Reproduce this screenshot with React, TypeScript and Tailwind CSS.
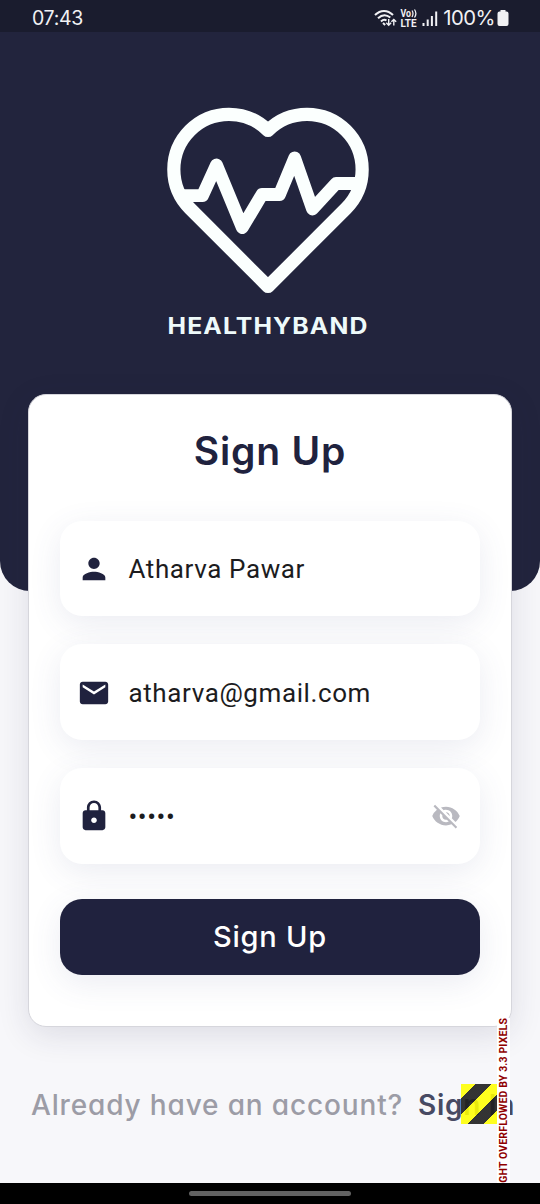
import type { ReactNode } from "react";
import { MdEmail, MdLock, MdPerson, MdVisibilityOff } from "react-icons/md";

function StatusBar() {
  return (
    <div className="flex h-8 items-center bg-[#1a1c2e] pl-8 pr-[31px] font-['Inter',sans-serif] text-[#f1f1f4]">
      <span className="mt-[5px] text-[19.500px] leading-none tracking-[-0.3px]">07:43</span>
      <div className="ml-auto flex items-center pt-[4px]">
        <svg width="24" height="20" viewBox="0 0 24 20" fill="none" stroke="currentColor" strokeWidth="2">
          <path d="M1 7C6.500 1.500 13.500 1.500 19 7" />
          <path d="M4 10.300C8 6.500 12.500 6.500 16.300 9.500" />
          <path d="M7 13.500C9 11.500 11 11.500 12.500 12.500" />
          <path d="M9 15l2.200 2" />
          <path d="M14.700 11v6M12.300 14.800l2.400 2.400 2.400-2.400M19.800 17.500v-6M17.400 13.800l2.400-2.400 2.400 2.400" strokeWidth="1.400" />
        </svg>
        <svg width="18" height="20" viewBox="0 0 18 20" className="ml-[2px]" fill="currentColor">
          <text x="0.500" y="9" textLength="10.500" lengthAdjust="spacingAndGlyphs" className="font-['Roboto',sans-serif] text-[10px] font-bold">Vo</text>
          <path d="M12 2.500q2 3 0 6.500M14.500 1.500q2.800 4 0 8" fill="none" stroke="currentColor" strokeWidth="1.300" />
          <text x="0.500" y="18.800" textLength="16" lengthAdjust="spacingAndGlyphs" className="font-['Roboto',sans-serif] text-[11px] font-bold">LTE</text>
        </svg>
        <svg width="16" height="20" viewBox="0 0 16 20" className="ml-1" stroke="currentColor" strokeWidth="2">
          <path d="M1.500 18v-3M5.700 18V11.500M9.900 18V8M14.200 18V3.500" />
        </svg>
        <span className="ml-[5px] text-[20.300px] leading-none tracking-[-0.5px]">100%</span>
        <svg width="12" height="18" viewBox="0 0 12 18" className="ml-[2px]" fill="currentColor">
          <path d="M3.500 1h5v1.500H9.500q2 0 2 2v10.500q0 2-2 2H2.500q-2 0-2-2V4.500q0-2 2-2h1z" />
        </svg>
      </div>
    </div>
  );
}

function Logo() {
  return (
    <svg width="240" height="250" viewBox="148 90 240 250" className="mx-auto mt-[58px] -translate-x-[2px]" fill="none" stroke="#fbfffe" strokeLinejoin="round" strokeLinecap="round">
      <path strokeWidth="13.200" d="M268 130.500A55 55 0 1 0 190 208.500L268 286.500L346 208.500A55 55 0 1 0 268 130.500Z" />
      <path strokeWidth="12.800" d="M181 195.700H202.500L216.500 165L242.300 227.500L262 194.500H279.500L294.700 158L312.500 209L336 183.500H360" />
      <text x="167.500" y="334.200" textLength="201" lengthAdjust="spacingAndGlyphs" fill="#eefafa" stroke="none" className="font-['Inter',sans-serif] text-[22.500px] font-bold tracking-[1px]">HEALTHYBAND</text>
    </svg>
  );
}

function Field({ icon, children, trailing }: { icon: ReactNode; children: ReactNode; trailing?: ReactNode }) {
  return (
    <div className="flex h-[95.700px] items-center rounded-[22px] bg-white px-[17px] shadow-[0_8px_32px_rgba(70,80,135,0.11)]">
      <span className="pt-px text-[34px] text-[#20223e]">{icon}</span>
      <span className="ml-[17.500px] flex-1 pt-[2px] font-['Roboto',sans-serif] text-[26px] leading-none tracking-[0.600px] text-[#1c1c1e]">{children}</span>
      {trailing}
    </div>
  );
}

function OverflowMarker() {
  return (
    <div className="absolute right-[28px] top-[1018px] flex h-[165px] overflow-hidden">
      <div className="mt-[66px] h-10 w-9 bg-[repeating-linear-gradient(135deg,#ffff00e0_0_10px,#202020e8_10px_21.300px,#ffff00e0_21.300px_32.600px,#202020e8_32.600px_43.900px,#ffff00e0_43.900px_60px)]" />
      <div className="w-[15px]">
        <div className="w-[13px] rotate-180 whitespace-nowrap bg-white font-['Roboto',sans-serif] text-[10.500px] font-bold leading-[13px] tracking-[0.150px] text-[#900000] [writing-mode:vertical-rl]">RIGHT OVERFLOWED BY 3.3 PIXELS</div>
      </div>
    </div>
  );
}

export default function App() {
  return (
    <div className="relative flex h-[1204px] w-[540px] flex-col overflow-hidden bg-[#f7f7fa] font-['Inter',sans-serif] [font-feature-settings:'cv11']">
      <header className="h-[591px] shrink-0 overflow-hidden rounded-b-[30px] bg-[#22243d]">
        <StatusBar />
        <Logo />
      </header>
      <main className="relative mx-7 -mt-[197px] flex h-[633px] shrink-0 flex-col overflow-hidden rounded-[18px] border border-[#d6d6dc] bg-white px-[31px] shadow-[0_8px_32px_rgba(34,36,70,0.12)]">
        <h1 className="mt-[35px] h-[90.500px] text-center text-[39px] font-semibold leading-[42px] tracking-[0.800px] text-[#20223e]">Sign Up</h1>
        <form className="flex flex-col gap-7" onSubmit={(e) => e.preventDefault()}>
          <Field icon={<MdPerson />}>Atharva Pawar</Field>
          <Field icon={<MdEmail />}>atharva@gmail.com</Field>
          <Field icon={<MdLock />} trailing={<MdVisibilityOff className="mr-[2px] text-[30px] text-[#b9b9c0]" />}>
            •••••
          </Field>
          <button className="mt-[7px] h-[76px] rounded-[22px] bg-[#20223e] text-[29px] font-medium tracking-[0.800px] text-white shadow-[0_8px_32px_rgba(70,80,135,0.11)]">Sign Up</button>
        </form>
      </main>
      <p className="ml-[31px] mt-[58px] flex whitespace-nowrap text-[28px] leading-10 text-[#9c9ca6]">
        <span className="w-[387px] font-medium tracking-[0.850px]">Already have an account?</span>
        <span className="font-semibold tracking-[0.700px] text-[#484a63]">Sign In</span>
      </p>
      <OverflowMarker />
      <footer className="mt-auto flex h-[21px] shrink-0 items-center justify-center bg-black">
        <div className="h-[5px] w-[162px] rounded-full bg-[#626262]" />
      </footer>
    </div>
  );
}
